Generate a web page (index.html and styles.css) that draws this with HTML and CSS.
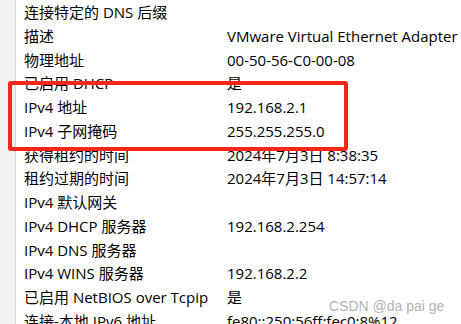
FILE: index.html
```html
<!DOCTYPE html>
<html lang="zh-CN">
<head>
<meta charset="utf-8">
<link rel="stylesheet" href="styles.css">
</head>
<body>
<div class="panel">
  <div class="gutter"></div>
  <div class="list">
    <div class="row"><span class="k">连接特定的 DNS 后缀</span><span class="v"></span></div>
    <div class="row"><span class="k">描述</span><span class="v">VMware Virtual Ethernet Adapter for VMnet8</span></div>
    <div class="row"><span class="k">物理地址</span><span class="v">00-50-56-C0-00-08</span></div>
    <div class="row"><span class="k">已启用 DHCP</span><span class="v">是</span></div>
    <div class="row"><span class="k">IPv4 地址</span><span class="v">192.168.2.1</span></div>
    <div class="row"><span class="k">IPv4 子网掩码</span><span class="v">255.255.255.0</span></div>
    <div class="row"><span class="k">获得租约的时间</span><span class="v">2024年7月3日 8:38:35</span></div>
    <div class="row"><span class="k">租约过期的时间</span><span class="v">2024年7月3日 14:57:14</span></div>
    <div class="row"><span class="k">IPv4 默认网关</span><span class="v"></span></div>
    <div class="row"><span class="k">IPv4 DHCP 服务器</span><span class="v">192.168.2.254</span></div>
    <div class="row"><span class="k">IPv4 DNS 服务器</span><span class="v"></span></div>
    <div class="row"><span class="k">IPv4 WINS 服务器</span><span class="v">192.168.2.2</span></div>
    <div class="row"><span class="k">已启用 NetBIOS over Tcpip</span><span class="v">是</span></div>
    <div class="row"><span class="k">连接-本地 IPv6 地址</span><span class="v">fe80::250:56ff:fec0:8%12</span></div>
  </div>
  <div class="highlight"></div>
  <div class="watermark">CSDN @da pai ge</div>
</div>
</body>
</html>
```
FILE: styles.css
```css
html, body {
  margin: 0;
  padding: 0;
  background: #ffffff;
  overflow: hidden;
}
.panel {
  position: relative;
  display: flex;
  width: 461px;
  height: 324px;
  overflow: hidden;
  font-family: "Open Sans", "Noto Sans CJK SC", sans-serif;
  font-size: 15px;
  color: #000;
}
.gutter {
  flex: 0 0 15px;
  background: #f0f0f0;
  border-right: 1px solid #d4d4d4;
}
.list {
  flex: 1;
  padding: 1px 0 0 8px;
  white-space: nowrap;
}
.row {
  display: grid;
  grid-template-columns: 203px auto;
  height: 23.77px;
  line-height: 23.77px;
}
.highlight {
  position: absolute;
  left: 8px;
  top: 81px;
  width: 332px;
  height: 62px;
  border: 4px solid #f5261c;
  border-radius: 3px;
}
.watermark {
  position: absolute;
  left: 329px;
  top: 298px;
  font-family: "Liberation Sans", sans-serif;
  font-size: 14px;
  color: rgba(150, 150, 150, 0.75);
}
```
